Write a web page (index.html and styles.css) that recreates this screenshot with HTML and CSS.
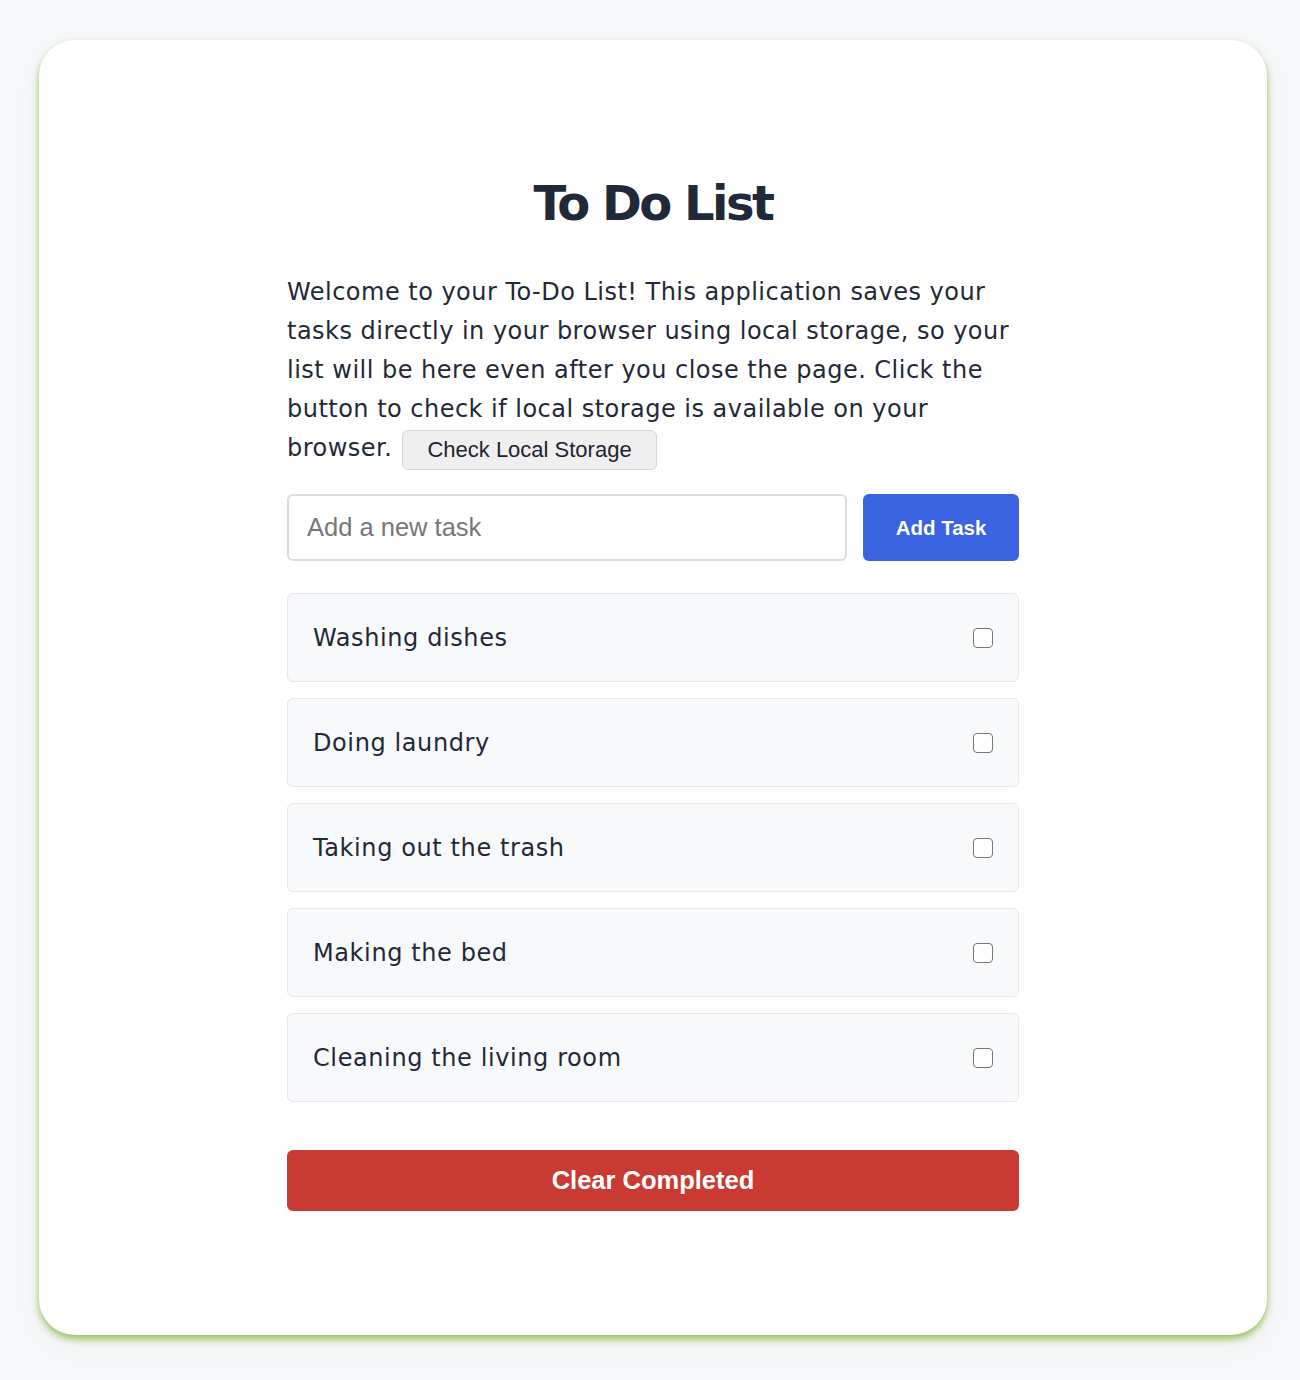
FILE: index.html
```html
<!DOCTYPE html>
<html lang="en">
<head>
<meta charset="utf-8">
<title>To Do List</title>
<link rel="stylesheet" href="styles.css">
</head>
<body>
<main class="card">
  <div class="content">
    <h1 class="title">To Do List</h1>
    <p class="intro">Welcome to your To-Do List! This application saves your tasks directly in your browser using local storage, so your list will be here even after you close the page. Click the button to check if local storage is available on your browser. <button class="check-btn" type="button">Check Local Storage</button></p>
    <form class="add-form">
      <input class="task-input" type="text" placeholder="Add a new task">
      <button class="add-btn" type="button">Add Task</button>
    </form>
    <ul class="task-list">
      <li class="task"><span class="task-text">Washing dishes</span><input class="task-check" type="checkbox"></li>
      <li class="task"><span class="task-text">Doing laundry</span><input class="task-check" type="checkbox"></li>
      <li class="task"><span class="task-text">Taking out the trash</span><input class="task-check" type="checkbox"></li>
      <li class="task"><span class="task-text">Making the bed</span><input class="task-check" type="checkbox"></li>
      <li class="task"><span class="task-text">Cleaning the living room</span><input class="task-check" type="checkbox"></li>
    </ul>
    <button class="clear-btn" type="button">Clear Completed</button>
  </div>
</main>
</body>
</html>
```

FILE: styles.css
```css
* { box-sizing: border-box; }

html, body {
  margin: 0;
  padding: 0;
  background: #f7f8fa;
}

body {
  padding: 40px 33px 44px 39px;
  font-family: "DejaVu Sans", "Open Sans", sans-serif;
  color: #1f2937;
}

.card {
  background: #ffffff;
  border-radius: 36px;
  box-shadow: 0 4px 7px rgba(145, 192, 85, 0.95), 0 10px 30px rgba(0, 0, 0, 0.04);
  padding: 132px 0 124px;
}

.content {
  width: 732px;
  margin: 0 auto;
}

.title {
  margin: 0;
  font-size: 48px;
  line-height: 62px;
  font-weight: 700;
  text-align: center;
  color: #1f2937;
  letter-spacing: -2.5px;
}

.intro {
  margin: 39px 0 24px;
  font-size: 24px;
  line-height: 39px;
  letter-spacing: 0.48px;
  color: #1f2937;
}

.check-btn {
  font-family: "Liberation Sans", Arial, sans-serif;
  font-size: 22px;
  letter-spacing: 0;
  color: #1f2330;
  background: #efefef;
  border: 1px solid #d6d6d6;
  border-radius: 6px;
  height: 40px;
  padding: 0 24px;
  margin-left: 2px;
  vertical-align: -1px;
}

.add-form {
  display: flex;
  gap: 16px;
  margin: 0 0 32px;
}

.task-input {
  flex: 1;
  height: 67px;
  border: 2px solid #dcdcdc;
  border-radius: 6px;
  padding: 0 18px;
  font-family: "Liberation Sans", Arial, sans-serif;
  font-size: 25.5px;
  color: #1f2937;
  outline: none;
}

.task-input::placeholder { color: #777777; }

.add-btn {
  width: 156px;
  height: 67px;
  border: none;
  border-radius: 6px;
  background: #3a63e2;
  color: #ffffff;
  font-family: "Liberation Sans", Arial, sans-serif;
  font-weight: 700;
  font-size: 20.5px;
}

.task-list {
  list-style: none;
  margin: 0 0 48px;
  padding: 0;
  display: flex;
  flex-direction: column;
  gap: 16px;
}

.task {
  height: 89px;
  display: flex;
  align-items: center;
  justify-content: space-between;
  padding: 0 25px;
  background: #f8f9fb;
  border: 1px solid #e5e7eb;
  border-radius: 6px;
  font-size: 24px;
  letter-spacing: 0.6px;
  color: #1f2937;
}

.task-check {
  appearance: none;
  -webkit-appearance: none;
  margin: 0;
  width: 20px;
  height: 20px;
  border: 1.5px solid #767676;
  border-radius: 4px;
  background: #ffffff;
}

.clear-btn {
  display: block;
  width: 100%;
  height: 61px;
  border: none;
  border-radius: 6px;
  background: #c93a32;
  color: #ffffff;
  font-family: "Liberation Sans", Arial, sans-serif;
  font-weight: 700;
  font-size: 25.5px;
}
```
